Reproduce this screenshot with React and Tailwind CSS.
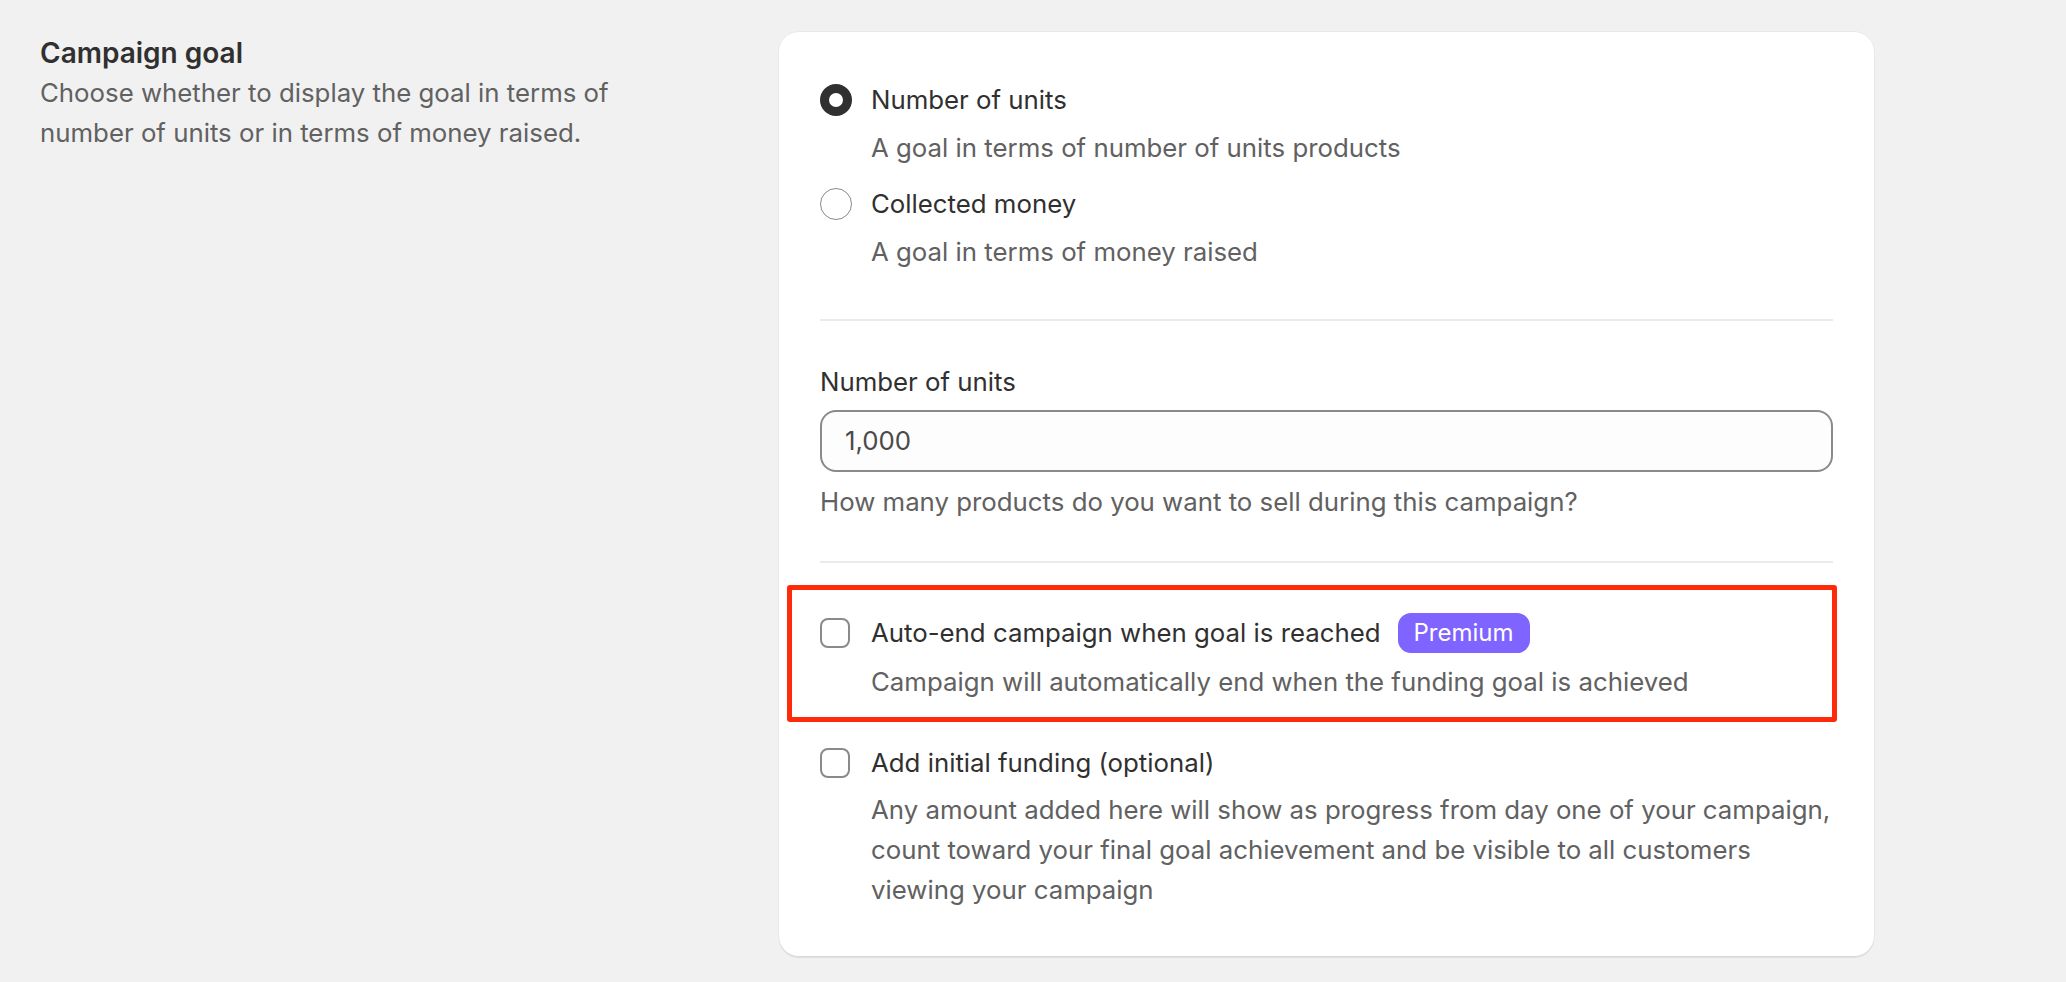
export default function App() {
  return (
    <div className="min-h-screen bg-[#f1f1f1] font-['Inter','Noto_Sans',sans-serif] text-[#303030]">
      <div className="flex pt-[32px] pl-[40px]">
        {/* left annotation */}
        <div className="w-[739px] shrink-0 pt-[1px]">
          <h2 className="text-[28px] leading-[40px] font-semibold text-[#303030]">Campaign goal</h2>
          <p className="w-[640px] text-[25.8px] leading-[40px] text-[#616161]">
            Choose whether to display the goal in terms of number of units or in terms of money raised.
          </p>
        </div>

        {/* card */}
        <div className="w-[1095px] shrink-0 bg-white rounded-[20px] shadow-[0_2px_1px_rgba(0,0,0,0.07),0_0_0_1px_rgba(0,0,0,0.03)] px-[41px] pt-[48px] pb-[46px]">
          {/* radios */}
          <div>
            <div className="flex items-center h-[40px]">
              <span className="w-[32px] h-[32px] rounded-full border-[9px] border-[#303030] bg-white shrink-0" />
              <span className="ml-[19px] text-[25.8px] leading-[40px]">Number of units</span>
            </div>
            <p className="mt-[8px] pl-[51px] text-[25.8px] leading-[40px] text-[#616161]">
              A goal in terms of number of units products
            </p>
            <div className="flex items-center h-[40px] mt-[16px]">
              <span className="w-[32px] h-[32px] rounded-full border-[1.5px] border-[#8a8a8a] bg-white shrink-0" />
              <span className="ml-[19px] text-[25.8px] leading-[40px]">Collected money</span>
            </div>
            <p className="mt-[8px] pl-[51px] text-[25.8px] leading-[40px] text-[#616161]">
              A goal in terms of money raised
            </p>
          </div>

          <div className="mt-[47px] h-[2px] bg-[#ebebeb]" />

          {/* number input */}
          <div className="mt-[41px]">
            <label className="block text-[25.8px] leading-[40px]">Number of units</label>
            <div className="mt-[8px] h-[62px] rounded-[16px] border-[2px] border-[#8a8a8a] bg-[#fdfdfd] flex items-center px-[23px]">
              <span className="text-[25.8px] text-[#4a4a4a]">1,000</span>
            </div>
            <p className="mt-[10px] text-[25.8px] leading-[40px] text-[#616161]">
              How many products do you want to sell during this campaign?
            </p>
          </div>

          <div className="mt-[39px] h-[2px] bg-[#ebebeb]" />

          {/* highlighted option */}
          <div className="mt-[22px] -ml-[33px] -mr-[4px] border-[5px] border-[#ff2a0a] rounded-[3px] pl-[28px] pt-[23px] pb-[15px]">
            <div className="flex items-center h-[40px]">
              <span className="w-[30px] h-[30px] rounded-[8px] border-[2px] border-[#8a8a8a] bg-white shrink-0" />
              <span className="ml-[21px] text-[25.8px] leading-[40px]">Auto-end campaign when goal is reached</span>
              <span className="ml-[17px] h-[40px] px-[16px] rounded-[13px] bg-[#7f64ff] text-white text-[24px] leading-[40px]">
                Premium
              </span>
            </div>
            <p className="mt-[9px] pl-[51px] text-[25.8px] leading-[40px] text-[#616161]">
              Campaign will automatically end when the funding goal is achieved
            </p>
          </div>

          <div className="mt-[21px]">
            <div className="flex items-center h-[40px]">
              <span className="w-[30px] h-[30px] rounded-[8px] border-[2px] border-[#8a8a8a] bg-white shrink-0" />
              <span className="ml-[21px] text-[25.8px] leading-[40px]">Add initial funding (optional)</span>
            </div>
            <p className="mt-[7px] -mr-[12px] pl-[51px] text-[25.8px] leading-[40px] text-[#616161]">
              Any amount added here will show as progress from day one of your campaign, count toward your final goal
              achievement and be visible to all customers viewing your campaign
            </p>
          </div>
        </div>
      </div>
    </div>
  );
}
